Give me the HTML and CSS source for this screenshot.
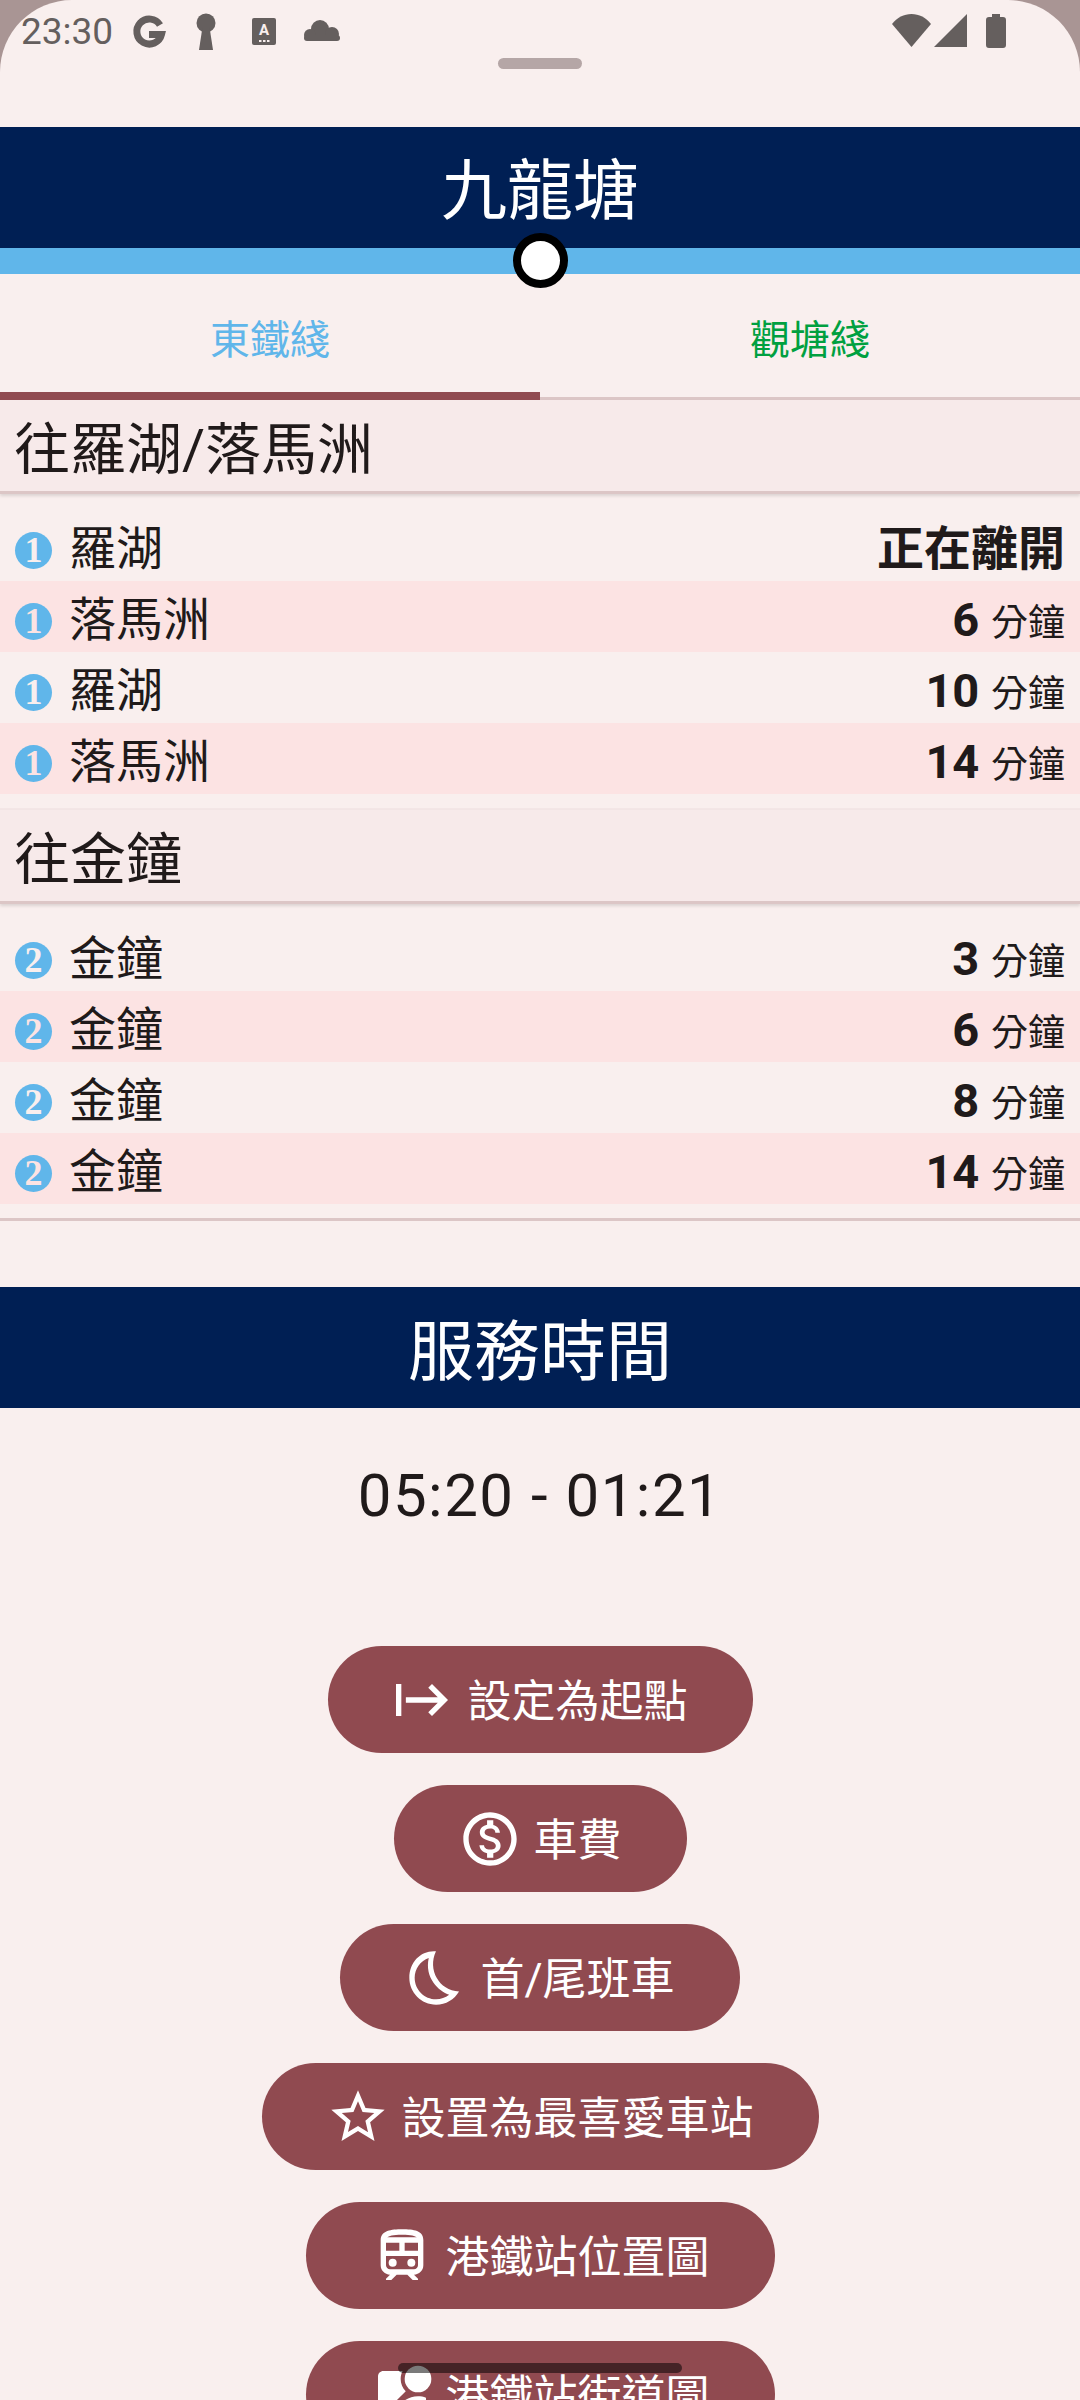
FILE: index.html
```html
<!DOCTYPE html>
<html lang="zh-Hant">
  <head>
    <meta charset="UTF-8" />
    <meta name="viewport" content="width=device-width, initial-scale=1.0" />
    <title>九龍塘</title>
    <link rel="stylesheet" href="styles.css">
  </head>
  <body>
    <div class="sheet">
      <div class="status-bar">
        <span class="clock">23:30</span>
        <svg class="status-icon" viewBox="0 0 58 38">
          <path d="M41 12a12.500 12.500 0 1 0 1.500 9.500H30" fill="none" stroke="currentColor" stroke-width="7" />
        </svg>
        <svg class="status-icon" viewBox="0 0 58 38">
          <circle cx="29" cy="10" r="9.500" fill="currentColor" />
          <path d="M25.500 14h7l3.500 23h-14z" fill="currentColor" />
        </svg>
        <svg class="status-icon" viewBox="0 0 58 38">
          <rect x="17" y="5" width="24" height="27" rx="2" fill="currentColor" />
          <text x="29" y="22" class="status-a">A</text>
          <path d="M24 27h2.500v2H24zM28 27h2.500v2H28zM32 27h2.500v2H32z" fill="#f9efee" />
        </svg>
        <svg class="status-icon" viewBox="0 0 58 38" fill="currentColor">
          <circle cx="27" cy="16" r="9" />
          <circle cx="17" cy="22" r="6" />
          <circle cx="39" cy="21" r="7" />
          <rect x="11" y="22" width="36" height="6" rx="3" />
        </svg>
        <span class="status-spacer"></span>
        <svg class="status-right wifi" viewBox="0 0 39 33">
          <path d="M0 10C5 3.500 12 0 19.500 0S34 3.500 39 10L19.500 33z" fill="currentColor" />
        </svg>
        <svg class="status-right signal" viewBox="0 0 33 33">
          <path d="M33 0v33H0z" fill="currentColor" />
        </svg>
        <svg class="status-right battery" viewBox="0 0 20 34">
          <path d="M6 0h8v3h3a3 3 0 0 1 3 3v25a3 3 0 0 1-3 3H3a3 3 0 0 1-3-3V6a3 3 0 0 1 3-3h3z" fill="currentColor" />
        </svg>
      </div>
      <div class="handle-wrap"><div class="handle"></div></div>

      <div class="banner station-title">九龍塘</div>
      <div class="line-strip">
        <span class="station-dot"></span>
      </div>

      <div class="tabs">
        <div class="tab tab-active east">東鐵綫</div>
        <div class="tab kwun-tong">觀塘綫</div>
      </div>

      <div class="direction">往羅湖/落馬洲</div>
      <div class="rows">
        <div class="row">
          <span class="platform">1</span><span class="dest">羅湖</span>
          <span class="eta-now">正在離開</span>
        </div>
        <div class="row alt">
          <span class="platform">1</span><span class="dest">落馬洲</span>
          <span class="eta"><b>6</b> <small>分鐘</small></span>
        </div>
        <div class="row">
          <span class="platform">1</span><span class="dest">羅湖</span>
          <span class="eta"><b>10</b> <small>分鐘</small></span>
        </div>
        <div class="row alt">
          <span class="platform">1</span><span class="dest">落馬洲</span>
          <span class="eta"><b>14</b> <small>分鐘</small></span>
        </div>
      </div>
      <div class="faint-line"></div>

      <div class="direction">往金鐘</div>
      <div class="rows">
        <div class="row">
          <span class="platform">2</span><span class="dest">金鐘</span>
          <span class="eta"><b>3</b> <small>分鐘</small></span>
        </div>
        <div class="row alt">
          <span class="platform">2</span><span class="dest">金鐘</span>
          <span class="eta"><b>6</b> <small>分鐘</small></span>
        </div>
        <div class="row">
          <span class="platform">2</span><span class="dest">金鐘</span>
          <span class="eta"><b>8</b> <small>分鐘</small></span>
        </div>
        <div class="row alt">
          <span class="platform">2</span><span class="dest">金鐘</span>
          <span class="eta"><b>14</b> <small>分鐘</small></span>
        </div>
      </div>
      <div class="end-line"></div>

      <div class="banner hours-title">服務時間</div>
      <div class="hours">05:20 - 01:21</div>

      <div class="actions">
        <div class="action">
          <svg class="action-icon" viewBox="0 0 24 24">
            <path d="M1.500 6h2v12h-2zM15 6l-1.410 1.410L17.170 11H5.200v2h11.970l-3.580 3.590L15 18l6-6z" />
          </svg>
          <span>設定為起點</span>
        </div>
        <div class="action">
          <svg class="action-icon" viewBox="0 0 24 24">
            <path d="M12 2C6.480 2 2 6.480 2 12s4.480 10 10 10 10-4.480 10-10S17.520 2 12 2zm0 18c-4.410 0-8-3.590-8-8s3.590-8 8-8 8 3.590 8 8-3.590 8-8 8zm.310-8.860c-1.770-.450-2.340-.940-2.340-1.670 0-.840.790-1.430 2.100-1.430 1.380 0 1.900.660 1.940 1.640h1.710c-.050-1.340-.870-2.570-2.490-2.970V5H10.900v1.690c-1.510.320-2.720 1.300-2.720 2.810 0 1.790 1.490 2.690 3.660 3.210 1.950.460 2.340 1.150 2.340 1.870 0 .530-.390 1.390-2.100 1.390-1.600 0-2.230-.720-2.320-1.640H8.040c.100 1.700 1.360 2.660 2.860 2.970V19h2.340v-1.670c1.520-.290 2.720-1.160 2.730-2.770-.010-2.200-1.900-2.960-3.660-3.420z" />
          </svg>
          <span>車費</span>
        </div>
        <div class="action">
          <svg class="action-icon" viewBox="0 0 24 24">
            <path d="M9.270 4.490c-1.630 7.540 3.750 12.410 7.660 13.800C15.540 19.380 13.810 20 12.040 20 7.610 20 4 16.370 4 11.910 4 8.430 6.250 5.550 9.270 4.490M11.990 2.010C6.400 1.560 2 6.010 2 11.910 2 17.450 6.480 22 12.040 22c3.660 0 6.860-1.990 8.600-4.960-7.560-.260-11.910-8.210-8.650-15.030z" />
          </svg>
          <span>首/尾班車</span>
        </div>
        <div class="action">
          <svg class="action-icon" viewBox="0 0 24 24">
            <path d="M22 9.240l-7.190-.620L12 2 9.190 8.630 2 9.240l5.460 4.730L5.820 21 12 17.270 18.180 21l-1.630-7.030L22 9.240zM12 15.400l-3.760 2.270 1-4.280-3.320-2.880 4.380-.380L12 6.100l1.710 4.040 4.380.380-3.320 2.880 1 4.280L12 15.400z" />
          </svg>
          <span>設置為最喜愛車站</span>
        </div>
        <div class="action">
          <svg class="action-icon" viewBox="0 0 24 24">
            <path d="M12 2c-4 0-8 .5-8 4v9.500C4 17.430 5.570 19 7.500 19L6 20.500v.5h2l2-2h4l2 2h2v-.5L16.500 19c1.930 0 3.500-1.570 3.500-3.500V6c0-3.500-3.580-4-8-4zm0 2c3.510 0 4.960.480 5.570 1H6.430c.610-.520 2.060-1 5.570-1zM6 7h5v3H6V7zm12 8.500c0 .830-.670 1.500-1.500 1.500h-9c-.830 0-1.500-.670-1.500-1.500V12h12v3.500zm0-5.500h-5V7h5v3z" />
            <circle cx="8.500" cy="14.500" r="1.500" />
            <circle cx="15.500" cy="14.500" r="1.500" />
          </svg>
          <span>港鐵站位置圖</span>
        </div>
        <div class="action">
          <svg class="action-icon" viewBox="0 0 24 24">
            <path d="M12.560 14.330c-.340.270-.560.700-.560 1.170V21h7c1.100 0 2-.9 2-2v-5.980c-.940-.330-1.950-.520-3-.520-2.030 0-3.930.7-5.440 1.830z" />
            <circle cx="18" cy="6" r="5" />
            <path d="M11.500 6c0-1.080.270-2.100.740-3H5c-1.100 0-2 .9-2 2v14c0 .550.230 1.050.590 1.410l9.820-9.820C12.230 9.420 11.500 7.800 11.500 6z" />
          </svg>
          <span>港鐵站街道圖</span>
        </div>
      </div>
      <div class="gesture-bar"></div>
    </div>
  </body>
</html>
```

FILE: styles.css
```css
* {
  margin: 0;
  padding: 0;
  box-sizing: border-box;
}

html,
body {
  height: 2400px;
  overflow: hidden;
}

body {
  font-family: Roboto, "Noto Sans CJK TC", sans-serif;
  background: #a99594;
  color: #201a1a;
}

.sheet {
  position: relative;
  height: 2400px;
  overflow: hidden;
  background: #f9efee;
  border-radius: 72px 72px 0 0;
}

.status-bar {
  height: 58px;
  padding: 13px 0 0 21px;
  display: flex;
  align-items: flex-start;
  color: #655f5e;
}

.clock {
  font-size: 37px;
  line-height: 38px;
  width: 98px;
}

.status-icon {
  width: 58px;
  height: 38px;
}

.status-a {
  font-size: 15px;
  font-weight: 700;
  text-anchor: middle;
  fill: #f9efee;
}

.status-spacer {
  flex: 1;
}

.status-right {
  height: 33px;
  margin-top: 1px;
}

.wifi {
  width: 39px;
}

.signal {
  width: 33px;
  margin-left: 3px;
}

.battery {
  width: 20px;
  height: 34px;
  margin-left: 19px;
  margin-right: 74px;
}

.handle-wrap {
  height: 69px;
  display: flex;
  justify-content: center;
}

.handle {
  width: 84px;
  height: 11px;
  background: #b5a6a6;
  border-radius: 6px;
}

.banner {
  height: 121px;
  background: #001f54;
  color: white;
  display: flex;
  align-items: center;
  justify-content: center;
}

.station-title {
  font-size: 66px;
  padding-bottom: 5px;
}

.line-strip {
  position: relative;
  height: 26px;
  background: #60b6ea;
}

.station-dot {
  position: absolute;
  left: 513px;
  top: -15px;
  width: 55px;
  height: 55px;
  background: white;
  border: 8px solid black;
  border-radius: 50%;
}

.tabs {
  height: 126px;
  display: flex;
  box-shadow: inset 0 -3px 0 #dcc6c6;
}

.tab {
  flex: 1;
  font-size: 40px;
  display: flex;
  align-items: center;
  justify-content: center;
}

.tab.east {
  color: #60b6ea;
}

.tab.kwun-tong {
  color: #00a040;
}

.tab-active {
  box-shadow: inset 0 -8px 0 #904a50;
}

.direction {
  height: 94px;
  padding: 0 14px 3px;
  font-size: 56px;
  display: flex;
  align-items: center;
  background: #f7eaea;
  border-bottom: 3px solid #dcc6c6;
  box-shadow: 0 2px 3px rgba(0, 0, 0, 0.12);
}

.rows {
  padding: 16px 0 14px;
}

.row {
  height: 71px;
  padding: 0 15px;
  display: flex;
  align-items: center;
  font-size: 47px;
}

.row.alt {
  background: #fce3e3;
}

.platform {
  width: 37px;
  height: 37px;
  margin: 9px 17px 0 0;
  background: #60b6ea;
  border-radius: 50%;
  color: #f9efee;
  font-family: "Liberation Serif", serif;
  font-weight: 700;
  font-size: 36px;
  line-height: 37px;
  text-align: center;
}

.row.alt .platform {
  color: #fce3e3;
}

.dest {
  flex: 1;
  margin-top: -3px;
}

.eta-now {
  font-size: 47px;
  font-weight: 700;
  margin-top: -3px;
}

.eta {
  margin-top: 5px;
}

.eta b {
  font-size: 47px;
  font-weight: 700;
}

.eta small {
  font-size: 37px;
}

.faint-line {
  height: 2px;
  background: #f3e6e6;
}

.end-line {
  height: 3px;
  background: #dcc6c6;
}

.hours-title {
  margin-top: 66px;
  height: 121px;
  font-size: 66px;
  padding-bottom: 4px;
}

.hours {
  height: 173px;
  padding-top: 2px;
  font-size: 60px;
  letter-spacing: 1.500px;
  display: flex;
  align-items: center;
  justify-content: center;
}

.actions {
  margin-top: 65px;
  display: flex;
  flex-direction: column;
  align-items: center;
  gap: 32px;
}

.action {
  height: 107px;
  padding: 0 65px 0 64px;
  display: flex;
  align-items: center;
  gap: 12px;
  background: #904a50;
  color: white;
  font-size: 44px;
  border-radius: 54px;
}

.action span {
  margin-top: -3px;
}

.action-icon {
  width: 64px;
  height: 64px;
  fill: white;
  flex: none;
}

.gesture-bar {
  position: absolute;
  left: 398px;
  top: 2363px;
  width: 284px;
  height: 10px;
  background: rgba(0, 0, 0, 0.52);
  border-radius: 5px;
}
```
